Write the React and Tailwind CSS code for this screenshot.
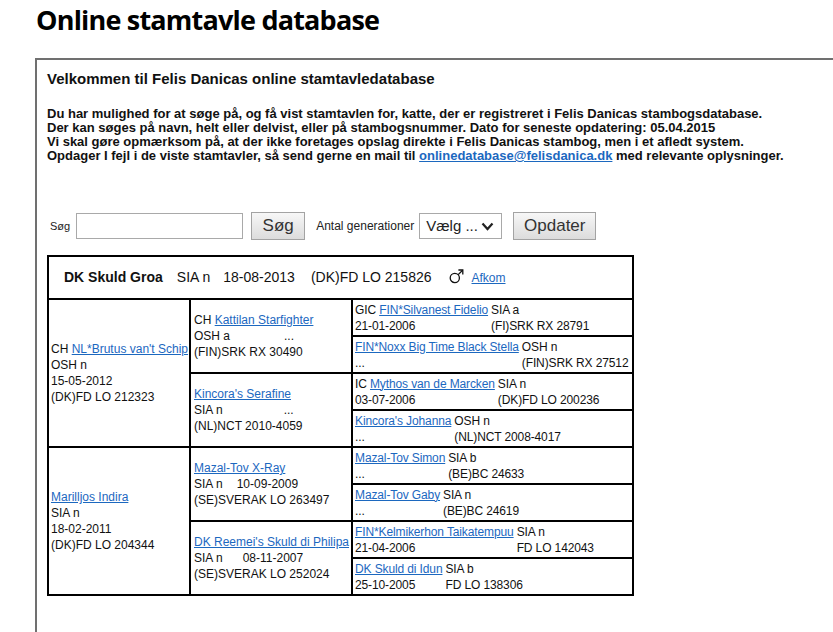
import { useState } from 'react';

const link = 'text-[#1c68bf] underline';

// Third generation: name + breed on top, date/nr + reg below (reg lines up under breed)
const gen3 = [
  { pre: 'GIC', name: 'FIN*Silvanest Fidelio', breed: 'SIA a', date: '21-01-2006', reg: '(FI)SRK RX 28791' },
  { name: 'FIN*Noxx Big Time Black Stella', breed: 'OSH n', date: '...', reg: '(FIN)SRK RX 27512' },
  { pre: 'IC', name: 'Mythos van de Marcken', breed: 'SIA n', date: '03-07-2006', reg: '(DK)FD LO 200236' },
  { name: "Kincora's Johanna", breed: 'OSH n', date: '...', reg: '(NL)NCT 2008-4017' },
  { name: 'Mazal-Tov Simon', breed: 'SIA b', date: '...', reg: '(BE)BC 24633' },
  { name: 'Mazal-Tov Gaby', breed: 'SIA n', date: '...', reg: '(BE)BC 24619' },
  { name: 'FIN*Kelmikerhon Taikatempuu', breed: 'SIA n', date: '21-04-2006', reg: 'FD LO 142043' },
  { name: 'DK Skuld di Idun', breed: 'SIA b', date: '25-10-2005', reg: 'FD LO 138306' },
];

const gen2 = [
  { pre: 'CH', name: 'Kattilan Starfighter', breed: 'OSH a', extra: '...', gap: 'ml-[54px]', reg: '(FIN)SRK RX 30490' },
  { name: "Kincora's Serafine", breed: 'SIA n', extra: '...', gap: 'ml-[61px]', reg: '(NL)NCT 2010-4059' },
  { name: 'Mazal-Tov X-Ray', breed: 'SIA n', extra: '10-09-2009', gap: 'ml-[14px]', reg: '(SE)SVERAK LO 263497' },
  { name: "DK Reemei's Skuld di Philipa", breed: 'SIA n', extra: '08-11-2007', gap: 'ml-[20px]', reg: '(SE)SVERAK LO 252024' },
];

const gen1 = [
  { pre: 'CH', name: "NL*Brutus van't Schip", breed: 'OSH n', date: '15-05-2012', reg: '(DK)FD LO 212323' },
  { name: 'Marilljos Indira', breed: 'SIA n', date: '18-02-2011', reg: '(DK)FD LO 204344' },
];

const Gen3Cell = ({ cat, row }) => (
  <div
    className="border border-black pl-[2px] flex items-center col-start-3 overflow-hidden"
    style={{ gridRowStart: row + 2 }}
  >
    <div className="grid grid-cols-[auto_auto] gap-x-[3px] leading-[16px] whitespace-nowrap tracking-[-0.12px]">
      <span>
        {cat.pre && <>{cat.pre} </>}
        <a href="#" className={link}>{cat.name}</a>
      </span>
      <span>{cat.breed}</span>
      <span>{cat.date}</span>
      <span>{cat.reg}</span>
    </div>
  </div>
);

const Gen2Cell = ({ cat, row }) => (
  <div
    className="border border-black px-[3px] flex items-center col-start-2 row-span-2"
    style={{ gridRowStart: row * 2 + 2 }}
  >
    <div className="leading-[16px] whitespace-nowrap">
      <div>
        {cat.pre && <>{cat.pre} </>}
        <a href="#" className={link}>{cat.name}</a>
      </div>
      <div>
        {cat.breed}
        <span className={cat.gap}>{cat.extra}</span>
      </div>
      <div>{cat.reg}</div>
    </div>
  </div>
);

const Gen1Cell = ({ cat, row }) => (
  <div
    className="border border-black px-[2px] flex items-center col-start-1 row-span-4"
    style={{ gridRowStart: row * 4 + 2 }}
  >
    <div className="leading-[16px] whitespace-nowrap">
      <div>
        {cat.pre && <>{cat.pre} </>}
        <a href="#" className={link}>{cat.name}</a>
      </div>
      <div>{cat.breed}</div>
      <div>{cat.date}</div>
      <div>{cat.reg}</div>
    </div>
  </div>
);

const MaleSign = () => (
  <svg width="15" height="16" viewBox="0 0 15 16" fill="none" stroke="#111" strokeWidth="1.3">
    <circle cx="5.8" cy="10" r="4.6" />
    <path d="M9.2 6.6 L13.6 2.2" />
    <path d="M9.4 2 L13.8 2 L13.8 6.4" />
  </svg>
);

const Pedigree = () => (
  <div className="w-[587px] border border-black grid grid-cols-[142px_162px_281px] grid-rows-[43px_repeat(8,37px)] text-[12px] text-[#111]">
    {/* Header */}
    <div className="col-span-3 border border-black flex items-center pl-[15px] text-[14px] whitespace-nowrap">
      <span className="font-bold">DK Skuld Groa</span>
      <span className="ml-[14px]">SIA n</span>
      <span className="ml-[13px]">18-08-2013</span>
      <span className="ml-[16px]">(DK)FD LO 215826</span>
      <span className="ml-[17px] -mt-[3px]">
        <MaleSign />
      </span>
      <a href="#" className={`${link} ml-[8px] text-[12px]`}>Afkom</a>
    </div>

    {gen1.map((c, i) => <Gen1Cell key={c.name} cat={c} row={i} />)}
    {gen2.map((c, i) => <Gen2Cell key={c.name} cat={c} row={i} />)}
    {gen3.map((c, i) => <Gen3Cell key={c.name} cat={c} row={i} />)}
  </div>
);

const SearchBar = () => {
  const [query, setQuery] = useState('');

  return (
    <div className="flex items-center h-[28px]">
      <span className="ml-[3px] text-[11px] text-[#222]">Søg</span>
      <input
        value={query}
        onChange={(e) => setQuery(e.target.value)}
        className="ml-[6px] w-[167px] h-[26px] border border-[#a9a9a9] bg-white outline-none px-1 text-[13px]"
      />
      <button className="ml-[8px] w-[54px] h-[28px] border border-[#a3a3a3] bg-linear-to-b from-[#f7f7f7] to-[#dcdcdc] text-[17px] text-[#333]">
        Søg
      </button>
      <span className="ml-[11px] text-[12px] text-[#222]">Antal generationer</span>
      <div className="ml-[5px] w-[83px] h-[26px] border border-[#a9a9a9] bg-white flex items-center justify-between pl-[6px] pr-[7px] text-[15px] text-[#222]">
        <span>Vælg ...</span>
        <svg width="13" height="9" viewBox="0 0 13 9" fill="none">
          <path d="M1.5 1.5 L6.5 7 L11.5 1.5" stroke="#222" strokeWidth="2.2" />
        </svg>
      </div>
      <button className="ml-[11px] w-[83px] h-[28px] border border-[#a3a3a3] bg-linear-to-b from-[#f7f7f7] to-[#dcdcdc] text-[17px] text-[#333]">
        Opdater
      </button>
    </div>
  );
};

export default function App() {
  return (
    <div className="w-full h-[632px] overflow-hidden bg-white font-['Liberation_Sans',Arial,sans-serif] text-[#111]">
      {/* Title */}
      <h1 className="ml-[36px] pt-[2px] h-[58px] font-['Open_Sans',sans-serif] font-bold text-[27px] leading-[36px] text-black tracking-[-0.8px]">
        Online stamtavle database
      </h1>

      {/* Main box */}
      <div className="ml-[35px] w-[830px] h-[700px] border-2 border-[#707070] pt-[11px] pl-[10px]">
        <h2 className="font-bold text-[15px] leading-[16px]">
          Velkommen til Felis Danicas online stamtavledatabase
        </h2>
        <div className="mt-[20px] font-bold text-[13px] leading-[14px]">
          <p>Du har mulighed for at søge på, og få vist stamtavlen for, katte, der er registreret i Felis Danicas stambogsdatabase.</p>
          <p>Der kan søges på navn, helt eller delvist, eller på stambogsnummer. Dato for seneste opdatering: 05.04.2015</p>
          <p>Vi skal gøre opmærksom på, at der ikke foretages opslag direkte i Felis Danicas stambog, men i et afledt system.</p>
          <p>
            Opdager I fejl i de viste stamtavler, så send gerne en mail til{' '}
            <a href="#" className={link}>onlinedatabase@felisdanica.dk</a> med relevante oplysninger.
          </p>
        </div>

        <div className="mt-[49px]">
          <SearchBar />
        </div>

        <div className="mt-[15px]">
          <Pedigree />
        </div>
      </div>
    </div>
  );
}
